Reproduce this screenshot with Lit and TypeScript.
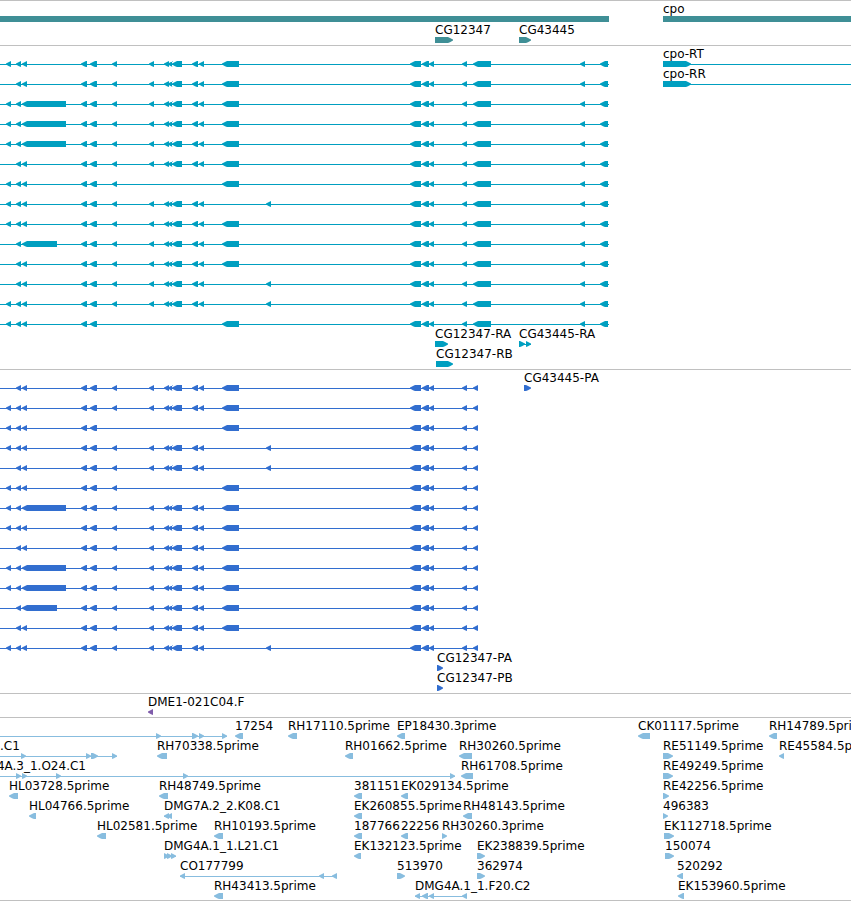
import { LitElement, html, svg, css, nothing } from "lit";
import { customElement, property } from "lit/decorators.js";

type Span = [number, number];

interface Feature {
  label?: string;
  at: number;
  dir: "left" | "right" | "none";
  blocks: Span[];
  line?: Span;
}

interface Track {
  name: string;
  rows: Feature[][];
}

/* Stretch of sequence beyond the visible window. */
const OPEN_END = 6000;

const left = (label: string, start: number, end: number): Feature => ({
  label, at: start, dir: "left", blocks: [[start, end]],
});
const right = (label: string, start: number, end: number): Feature => ({
  label, at: start, dir: "right", blocks: [[start, end]],
});
const chain = (
  label: string | undefined,
  at: number,
  dir: "left" | "right",
  line: Span,
  blocks: Span[],
): Feature => ({ label, at, dir, line, blocks });

/* Exons shared by every splice form of the long gene. */
const TAIL: Span = [6, 11];
const HEAD_EXONS: Span[] = [[81, 87], [90, 97]];
const F: Span[] = [[112, 117]];
const GHI: Span[] = [
  [149, 154], [164, 169], [168, 172], [172, 182], [192, 198], [199, 204],
];
const COMMON: Span[] = [[410, 421], [422, 429], [429, 434], [462, 467]];

/* a: tail exon, M/L: medium or long third exon, f/g: inner exons, j/k: alternative exon. */
function splice(form: string, last: Span[], end: number): Feature {
  const has = (c: string) => form.includes(c);
  const third = has("L") ? 66 : has("M") ? 57 : 27;
  return chain(undefined, 0, "left", [0, end], [
    ...(has("a") ? [TAIL] : []),
    [16, 21],
    [22, third],
    ...HEAD_EXONS,
    ...(has("f") ? F : []),
    ...(has("g") ? GHI : []),
    ...(has("j") ? [[222, 239] as Span] : []),
    ...(has("k") ? [[266, 271] as Span] : []),
    ...COMMON,
    ...last,
  ]);
}

const transcripts = [
  "afgj", "fgj", "aLfgj", "aLfgj", "aLfgj", "fgj", "afj",
  "afgk", "afgj", "Mfgj", "fgj", "fgk", "afgk", "aj",
].map((f) => [splice(f, [[473, 491], [580, 585], [600, 608]], 609)]);

const codings = [
  "fgj", "afgj", "aj", "afgk", "fgk", "afj", "aLfgj",
  "afgj", "fgj", "aLfgj", "aLfgj", "Mfgj", "fgj", "afgk",
].map((f) => [splice(f, [[473, 478]], 478)]);

const cpo = (label: string) =>
  chain(label, 663, "right", [663, OPEN_END], [[663, 691]]);

transcripts[0].push(cpo("cpo-RT"));
transcripts[1].push(cpo("cpo-RR"));
transcripts.push(
  [
    right("CG12347-RA", 435, 448),
    chain("CG43445-RA", 519, "right", [519, 531], [[519, 525], [526, 531]]),
  ],
  [right("CG12347-RB", 436, 453)],
);

codings[0].push(right("CG43445-PA", 524, 531));
codings.push([right("CG12347-PA", 437, 443)], [right("CG12347-PB", 437, 443)]);

const TRACKS: Track[] = [
  {
    name: "gene",
    rows: [
      [
        { at: 0, dir: "none", blocks: [[0, 609]] },
        { label: "cpo", at: 663, dir: "none", blocks: [[663, OPEN_END]] },
      ],
      [right("CG12347", 435, 453), right("CG43445", 519, 531)],
    ],
  },
  { name: "transcript", rows: transcripts },
  { name: "coding", rows: codings },
  { name: "clone", rows: [[left("DME1-021C04.F", 148, 153)]] },
  {
    name: "est",
    rows: [
      [
        chain(undefined, 0, "right", [0, 227], [[156, 161], [192, 198], [199, 204], [222, 227]]),
        left("17254", 235, 243),
        left("RH17110.5prime", 288, 297),
        left("EP18430.3prime", 397, 405),
        left("CK01117.5prime", 638, 650),
        left("RH14789.5prime", 769, 777),
      ],
      [
        chain(".C1", 0, "right", [0, 117], [[21, 26], [86, 91], [91, 98], [112, 117]]),
        left("RH70338.5prime", 157, 167),
        left("RH01662.5prime", 345, 353),
        left("RH30260.5prime", 459, 472),
        right("RE51149.5prime", 663, 673),
        left("RE45584.5prime", 779, 784),
      ],
      [
        chain("DMG4A.3_1.O24.C1", -32, "right", [0, 455],
          [[16, 21], [22, 27], [56, 61], [183, 188], [450, 455]]),
        left("RH61708.5prime", 461, 473),
        right("RE49249.5prime", 663, 673),
      ],
      [
        left("HL03728.5prime", 9, 18),
        left("RH48749.5prime", 159, 168),
        left("381151", 354, 362),
        left("EK029134.5prime", 401, 408),
        right("RE42256.5prime", 663, 669),
      ],
      [
        left("HL04766.5prime", 29, 36),
        chain("DMG7A.2_2.K08.C1", 164, "left", [164, 172], [[164, 169], [167, 172]]),
        left("EK260855.5prime", 354, 362),
        left("RH48143.5prime", 463, 472),
        right("496383", 663, 668),
      ],
      [
        left("HL02581.5prime", 97, 106),
        left("RH10193.5prime", 214, 223),
        left("187766", 354, 362),
        left("22256", 401, 408),
        right("RH30260.3prime", 442, 447),
        right("EK112718.5prime", 664, 674),
      ],
      [
        chain("DMG4A.1_1.L21.C1", 164, "right", [164, 176], [[164, 169], [167, 172], [171, 176]]),
        left("EK132123.5prime", 354, 361),
        right("EK238839.5prime", 477, 485),
        right("150074", 665, 674),
      ],
      [
        chain("CO177799", 180, "left", [180, 337], [[180, 185], [319, 324], [332, 337]]),
        right("513970", 397, 405),
        right("362974", 477, 485),
        left("520292", 677, 683),
      ],
      [
        left("RH43413.5prime", 214, 223),
        chain("DMG4A.1_1.F20.C2", 415, "left", [415, 467],
          [[415, 420], [422, 428], [429, 434], [462, 467]]),
        left("EK153960.5prime", 678, 684),
      ],
    ],
  },
];

/* A six-pixel bar whose leading end narrows to a slightly rounded point. */
function outline([s, e]: Span, dir: Feature["dir"]): string {
  if (dir === "none") {
    return `M${s} 0H${e}V6H${s}Z`;
  }
  const [tip, back, step] = dir === "left" ? [s, e, 1] : [e, s, -1];
  const mid = tip + 3 * step;
  const neck = tip + 5 * step;
  return `M${tip} 3.6V2.4L${mid} 1L${neck} 0H${back}V6H${neck}L${mid} 5.2Z`;
}

@customElement("track-row")
export class TrackRow extends LitElement {
  @property({ attribute: false }) features: Feature[] = [];

  static styles = css`
    :host {
      display: block;
      overflow: hidden;
    }
    .labels {
      position: relative;
      height: 14px;
      color: #000;
    }
    .label {
      position: absolute;
      top: 0;
      white-space: nowrap;
    }
    .glyphs {
      display: block;
      width: 100%;
      height: 6px;
      fill: currentColor;
    }
  `;

  render() {
    return html`
      <div class="labels">
        ${this.features.map((f) =>
          f.label
            ? html`<span class="label" style="left:${f.at}px">${f.label}</span>`
            : nothing,
        )}
      </div>
      <svg class="glyphs" aria-hidden="true">
        ${this.features.map((f) => svg`
          ${f.line
            ? svg`<rect x=${f.line[0]} y="3" width=${f.line[1] - f.line[0]} height="1"></rect>`
            : nothing}
          ${f.blocks.map((b) => svg`<path d=${outline(b, f.dir)}></path>`)}
        `)}
      </svg>
    `;
  }
}

@customElement("app-root")
export class AppRoot extends LitElement {
  static styles = css`
    :host {
      display: block;
      background: #fff;
      border-top: 1px solid #c0c0c0;
      font: 12px/14px "DejaVu Sans", sans-serif;
      overflow: hidden;
    }
    .track {
      display: flex;
      flex-direction: column;
      padding: 1px 0 2px;
      border-bottom: 1px solid #c0c0c0;
    }
    .gene {
      gap: 1px;
      color: #3f8f96;
    }
    .transcript {
      color: #009fc0;
    }
    .coding {
      color: #326ecf;
    }
    .clone {
      color: #7f5cab;
    }
    .est {
      padding-bottom: 1px;
      color: #88bddf;
    }
  `;

  render() {
    return TRACKS.map(
      (t) => html`
        <section class="track ${t.name}" aria-label=${t.name}>
          ${t.rows.map((r) => html`<track-row .features=${r}></track-row>`)}
        </section>
      `,
    );
  }
}
